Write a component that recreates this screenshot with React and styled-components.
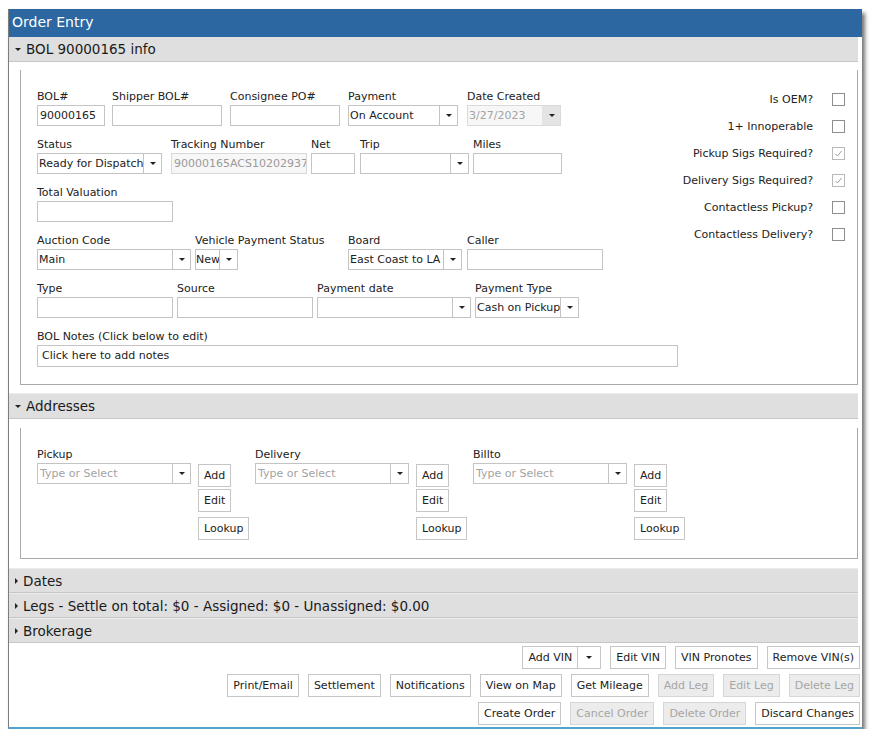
import React from 'react';
import styled, { createGlobalStyle } from 'styled-components';

const GlobalStyle = createGlobalStyle`
  body {
    margin: 0;
    background: #fff;
    font-family: "DejaVu Sans", Verdana, sans-serif;
    font-size: 11px;
    color: #222;
  }
`;

const Window = styled.div`
  margin: 9px 0 0 8px;
  width: 854px;
  box-sizing: border-box;
  background: #fff;
  border-left: 1px solid #7d7d7d;
  border-bottom: 2px solid #4ea4cc;
  box-shadow: 3px 4px 4px rgba(0, 0, 0, 0.55);
`;

const TitleBar = styled.div`
  height: 28px;
  box-sizing: border-box;
  padding: 2px 0 0 3px;
  background: #2c67a1;
  color: #fff;
  font-size: 14px;
  line-height: 22px;
`;

const Sections = styled.div`
  margin-right: 4px;
`;

const SectionHeader = styled.div`
  display: flex;
  align-items: center;
  gap: 5px;
  height: ${p => p.$h || 25}px;
  box-sizing: border-box;
  padding-left: 6px;
  background: #dfdfdf;
  border-bottom: 1px solid #c6c6c6;
  border-top: ${p => (p.$first ? 'none' : '1px solid #ececec')};
  font-size: 13.5px;
  color: #1a1a1a;
`;

const Caret = styled.span`
  width: 0;
  height: 0;
  ${p =>
    p.$open
      ? `border-left: 3px solid transparent;
         border-right: 3px solid transparent;
         border-top: 3px solid #222;`
      : `border-top: 3px solid transparent;
         border-bottom: 3px solid transparent;
         border-left: 3px solid #222;`}
`;

const SectionBody = styled.div`
  padding: ${p => p.$pt}px 0 ${p => p.$pb}px 11px;
`;

const Panel = styled.div`
  display: flex;
  border: 1px solid #a9a9a9;
  border-top: none;
  padding: 20px 0 ${p => p.$pb || 17}px 16px;
`;

const FormColumn = styled.div`
  flex: 1;
  display: flex;
  flex-direction: column;
`;

const Row = styled.div`
  display: flex;
  align-items: flex-start;
  margin-bottom: ${p => (p.$last ? 0 : 12)}px;
`;

const FieldBox = styled.div`
  display: flex;
  flex-direction: column;
  width: ${p => p.$w}px;
  margin-left: ${p => p.$ml || 0}px;
  flex: none;
`;

const Label = styled.div`
  line-height: 14px;
  margin-bottom: 1px;
  white-space: nowrap;
`;

const TextBox = styled.div`
  width: ${p => p.$w}px;
  height: ${p => p.$h || 21}px;
  box-sizing: border-box;
  border: 1px solid ${p => (p.$disabled ? '#d8d8d8' : '#c4c4c4')};
  background: ${p => (p.$disabled ? '#f7f7f7' : '#fff')};
  color: ${p => (p.$disabled ? '#9a9a9a' : '#222')};
  padding: 0 ${p => p.$px || 2}px;
  line-height: ${p => (p.$h || 21) - 2}px;
  white-space: nowrap;
  overflow: hidden;
`;

const SelectBox = styled.div`
  display: flex;
  width: ${p => p.$w}px;
  height: 21px;
  box-sizing: border-box;
  border: 1px solid ${p => (p.$disabled ? '#dadada' : '#c4c4c4')};
  background: ${p => (p.$disabled ? '#f7f7f7' : '#fff')};
`;

const SelectValue = styled.div`
  flex: 1;
  min-width: 0;
  overflow: hidden;
  white-space: nowrap;
  padding-left: ${p => p.$pl}px;
  line-height: 19px;
  color: ${p => (p.$muted ? '#a3a3a3' : '#222')};
`;

const SelectArrow = styled.div`
  flex: none;
  width: 17px;
  display: flex;
  align-items: center;
  justify-content: center;
  border-left: 1px solid ${p => (p.$disabled ? '#e4e4e4' : '#c4c4c4')};
  background: ${p => (p.$disabled ? '#e4e4e4' : 'transparent')};

  &::after {
    content: '';
    border-left: 3px solid transparent;
    border-right: 3px solid transparent;
    border-top: 3px solid #222;
  }
`;

const ChecksColumn = styled.div`
  display: flex;
  flex-direction: column;
  margin-top: -4px;
  padding-right: 12px;
`;

const CheckRow = styled.div`
  display: flex;
  align-items: center;
  justify-content: flex-end;
  gap: 19px;
  height: 27px;
`;

const Box = styled.div`
  width: 13px;
  height: 13px;
  box-sizing: border-box;
  border: 1px solid ${p => (p.$checked ? '#b9b9b9' : '#8e8e8e')};
  background: #fff;
  display: flex;
  align-items: center;
  justify-content: center;
`;

const AddressRow = styled.div`
  display: flex;
`;

const AddressColumn = styled.div`
  display: flex;
  width: 218px;
  flex: none;
`;

const StackedButtons = styled.div`
  display: flex;
  flex-direction: column;
  align-items: flex-start;
  margin: 16px 0 0 7px;
`;

const Button = styled.div`
  display: flex;
  align-items: center;
  height: 23px;
  box-sizing: border-box;
  padding: 0 5px;
  border: 1px solid ${p => (p.$disabled ? '#d6d6d6' : '#c6c6c6')};
  background: ${p => (p.$disabled ? '#ececec' : '#fff')};
  color: ${p => (p.$disabled ? '#a6a6a6' : '#222')};
  white-space: nowrap;
  margin-bottom: ${p => p.$mb || 0}px;
`;

const SplitButton = styled.div`
  display: flex;
  height: 23px;
  box-sizing: border-box;
  border: 1px solid #c6c6c6;
  background: #fff;
`;

const SplitMain = styled.div`
  display: flex;
  align-items: center;
  padding: 0 5px;
  border-right: 1px solid #c6c6c6;
`;

const SplitArrow = styled.div`
  width: 22px;
  display: flex;
  align-items: center;
  justify-content: center;

  &::after {
    content: '';
    border-left: 3px solid transparent;
    border-right: 3px solid transparent;
    border-top: 3px solid #222;
  }
`;

const Toolbar = styled.div`
  display: flex;
  flex-direction: column;
  gap: 5px;
  padding: 3px 2px 2px 0;
`;

const ToolbarRow = styled.div`
  display: flex;
  justify-content: flex-end;
  gap: 9px;
`;

const Field = ({ label, w, ml, children }) => (
  <FieldBox $w={w} $ml={ml}>
    <Label>{label}</Label>
    {children}
  </FieldBox>
);

const Select = ({ w, value, placeholder, disabled, pl = 1 }) => (
  <SelectBox $w={w} $disabled={disabled}>
    <SelectValue $muted={disabled || !value} $pl={pl}>
      {value || placeholder}
    </SelectValue>
    <SelectArrow $disabled={disabled} />
  </SelectBox>
);

const Check = ({ label, checked }) => (
  <CheckRow>
    <span>{label}</span>
    <Box $checked={checked}>
      {checked && (
        <svg width="9" height="9" viewBox="0 0 9 9">
          <polyline points="1.5,5 3.5,7 7.5,2" fill="none" stroke="#9d9d9d" strokeWidth="1" />
        </svg>
      )}
    </Box>
  </CheckRow>
);

const Header = ({ open, first, h, children }) => (
  <SectionHeader $first={first} $h={h}>
    <Caret $open={open} />
    {children}
  </SectionHeader>
);

const AddressBlock = ({ label }) => (
  <AddressColumn>
    <Field label={label} w={154}>
      <Select w={154} placeholder="Type or Select" pl={2} />
    </Field>
    <StackedButtons>
      <Button $mb={2}>Add</Button>
      <Button $mb={5}>Edit</Button>
      <Button>Lookup</Button>
    </StackedButtons>
  </AddressColumn>
);

export default function App() {
  return (
    <>
      <GlobalStyle />
      <Window>
        <TitleBar>Order Entry</TitleBar>
        <Sections>
          <Header open first>BOL 90000165 info</Header>
          <SectionBody $pt={8} $pb={8}>
            <Panel>
              <FormColumn>
                <Row>
                  <Field label="BOL#" w={68}>
                    <TextBox $w={68}>90000165</TextBox>
                  </Field>
                  <Field label="Shipper BOL#" w={110} ml={7}>
                    <TextBox $w={110} />
                  </Field>
                  <Field label="Consignee PO#" w={110} ml={8}>
                    <TextBox $w={110} />
                  </Field>
                  <Field label="Payment" w={110} ml={8}>
                    <Select w={110} value="On Account" />
                  </Field>
                  <Field label="Date Created" w={94} ml={9}>
                    <Select w={94} value="3/27/2023" disabled />
                  </Field>
                </Row>
                <Row>
                  <Field label="Status" w={125}>
                    <Select w={125} value="Ready for Dispatch" />
                  </Field>
                  <Field label="Tracking Number" w={136} ml={9}>
                    <TextBox $w={136} $disabled>90000165ACS1020293721</TextBox>
                  </Field>
                  <Field label="Net" w={44} ml={4}>
                    <TextBox $w={44} />
                  </Field>
                  <Field label="Trip" w={109} ml={5}>
                    <Select w={109} />
                  </Field>
                  <Field label="Miles" w={89} ml={4}>
                    <TextBox $w={89} />
                  </Field>
                </Row>
                <Row>
                  <Field label="Total Valuation" w={136}>
                    <TextBox $w={136} />
                  </Field>
                </Row>
                <Row>
                  <Field label="Auction Code" w={154}>
                    <Select w={154} value="Main" />
                  </Field>
                  <Field label="Vehicle Payment Status" w={149} ml={4}>
                    <Select w={43} value="New" pl={0} />
                  </Field>
                  <Field label="Board" w={114} ml={4}>
                    <Select w={114} value="East Coast to LA" />
                  </Field>
                  <Field label="Caller" w={136} ml={5}>
                    <TextBox $w={136} />
                  </Field>
                </Row>
                <Row>
                  <Field label="Type" w={136}>
                    <TextBox $w={136} />
                  </Field>
                  <Field label="Source" w={136} ml={4}>
                    <TextBox $w={136} />
                  </Field>
                  <Field label="Payment date" w={154} ml={4}>
                    <Select w={154} />
                  </Field>
                  <Field label="Payment Type" w={104} ml={4}>
                    <Select w={104} value="Cash on Pickup" />
                  </Field>
                </Row>
                <Row $last>
                  <Field label="BOL Notes (Click below to edit)" w={641}>
                    <TextBox $w={641} $h={22} $px={4}>Click here to add notes</TextBox>
                  </Field>
                </Row>
              </FormColumn>
              <ChecksColumn>
                <Check label="Is OEM?" />
                <Check label="1+ Innoperable" />
                <Check label="Pickup Sigs Required?" checked />
                <Check label="Delivery Sigs Required?" checked />
                <Check label="Contactless Pickup?" />
                <Check label="Contactless Delivery?" />
              </ChecksColumn>
            </Panel>
          </SectionBody>

          <Header open h={26}>Addresses</Header>
          <SectionBody $pt={9} $pb={9}>
            <Panel $pb={18}>
              <AddressRow>
                <AddressBlock label="Pickup" />
                <AddressBlock label="Delivery" />
                <AddressBlock label="Billto" />
              </AddressRow>
            </Panel>
          </SectionBody>

          <Header>Dates</Header>
          <Header>Legs - Settle on total: $0 - Assigned: $0 - Unassigned: $0.00</Header>
          <Header>Brokerage</Header>
        </Sections>

        <Toolbar>
          <ToolbarRow>
            <SplitButton>
              <SplitMain>Add VIN</SplitMain>
              <SplitArrow />
            </SplitButton>
            <Button>Edit VIN</Button>
            <Button>VIN Pronotes</Button>
            <Button>Remove VIN(s)</Button>
          </ToolbarRow>
          <ToolbarRow>
            <Button>Print/Email</Button>
            <Button>Settlement</Button>
            <Button>Notifications</Button>
            <Button>View on Map</Button>
            <Button>Get Mileage</Button>
            <Button $disabled>Add Leg</Button>
            <Button $disabled>Edit Leg</Button>
            <Button $disabled>Delete Leg</Button>
          </ToolbarRow>
          <ToolbarRow>
            <Button>Create Order</Button>
            <Button $disabled>Cancel Order</Button>
            <Button $disabled>Delete Order</Button>
            <Button>Discard Changes</Button>
          </ToolbarRow>
        </Toolbar>
      </Window>
    </>
  );
}
